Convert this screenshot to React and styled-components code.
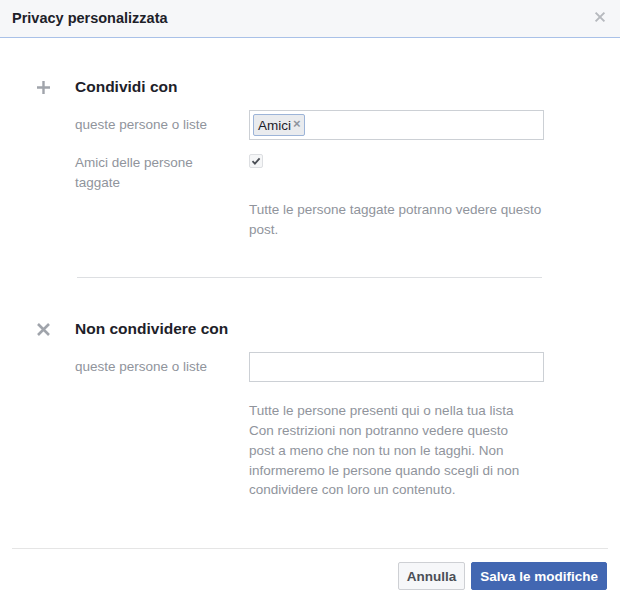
import React from 'react';
import styled, {createGlobalStyle} from 'styled-components';

const GlobalStyle = createGlobalStyle`
    html, body {
        margin: 0;
        padding: 0;
        background: #fff;
    }
    body {
        font-family: "Liberation Sans", Arial, Helvetica, sans-serif;
        color: #1d2129;
    }
`;

function PlusIcon () {
    return (
        <svg width="15" height="15" viewBox="0 0 15 15">
            <path d="M7.5 1v13M1 7.5h13" stroke="#a0a4ab" strokeWidth="2.4" fill="none"/>
        </svg>
    );
}

function CrossIcon ({size = 15, color = '#a0a4ab', stroke = 2.6}) {
    return (
        <svg width={size} height={size} viewBox="0 0 15 15">
            <path d="M2 2l11 11M13 2L2 13" stroke={color} strokeWidth={stroke} fill="none"/>
        </svg>
    );
}

function CheckIcon () {
    return (
        <svg width="10" height="10" viewBox="0 0 10 10">
            <path d="M1.5 5.2l2.4 2.4L8.6 2.4" stroke="#4b4f56" strokeWidth="1.8" fill="none"/>
        </svg>
    );
}

export default function App () {
    return (
        <>
            <GlobalStyle/>
            <Dialog>
                <Header>
                    <Title>Privacy personalizzata</Title>
                    <CloseButton><CrossIcon size={12} color="#b6b9be" stroke={2.4}/></CloseButton>
                </Header>

                <Body>
                    <Section>
                        <SectionHead>
                            <IconCell><PlusIcon/></IconCell>
                            <SectionTitle>Condividi con</SectionTitle>
                        </SectionHead>

                        <Row>
                            <Label>queste persone o liste</Label>
                            <TokenInput>
                                <Token>Amici<TokenRemove>×</TokenRemove></Token>
                            </TokenInput>
                        </Row>

                        <Row top>
                            <Label>Amici delle persone<br/>taggate</Label>
                            <Field>
                                <Checkbox><CheckIcon/></Checkbox>
                            </Field>
                        </Row>

                        <Help offset={-6} width={296}>
                            Tutte le persone taggate potranno vedere questo post.
                        </Help>
                    </Section>

                    <Divider/>

                    <Section>
                        <SectionHead>
                            <IconCell><CrossIcon/></IconCell>
                            <SectionTitle>Non condividere con</SectionTitle>
                        </SectionHead>

                        <Row>
                            <Label>queste persone o liste</Label>
                            <TokenInput/>
                        </Row>

                        <Help offset={6} width={288}>
                            Tutte le persone presenti qui o nella tua lista Con restrizioni non potranno vedere questo post a meno che non tu non le tagghi. Non informeremo le persone quando scegli di non condividere con loro un contenuto.
                        </Help>
                    </Section>
                </Body>

                <Footer>
                    <Button>Annulla</Button>
                    <Button primary>Salva le modifiche</Button>
                </Footer>
            </Dialog>
        </>
    );
}

const Dialog = styled.div`
    width: 620px;
    height: 600px;
    background: #fff;
    display: flex;
    flex-direction: column;
`;

const Header = styled.div`
    height: 38px;
    background: #f6f7f9;
    border-bottom: 1px solid #a9c1e8;
    display: flex;
    align-items: center;
    justify-content: space-between;
    padding: 0 14px 0 12px;
    box-sizing: border-box;
    flex-shrink: 0;
`;

const Title = styled.h1`
    margin: 0;
    font-size: 14.5px;
    font-weight: bold;
    color: #1d2129;
    margin-top: -2px;
`;

const CloseButton = styled.span`
    display: flex;
    align-items: center;
    margin-top: -4px;
`;

const Body = styled.div`
    padding: 39px 0 0 36px;
    flex: 1;
`;

const Section = styled.div`
    display: flex;
    flex-direction: column;
`;

const SectionHead = styled.div`
    display: flex;
    align-items: center;
    height: 20px;
    margin-bottom: 13px;
`;

const IconCell = styled.div`
    width: 39px;
    display: flex;
    align-items: center;
`;

const SectionTitle = styled.h2`
    margin: 0;
    font-size: 15.5px;
    font-weight: bold;
    color: #1d2129;
    line-height: 20px;
`;

const Row = styled.div`
    display: flex;
    align-items: ${props => props.top ? 'flex-start' : 'center'};
    margin-left: 39px;
    margin-bottom: 13px;
`;

const Label = styled.div`
    width: 174px;
    font-size: 13.5px;
    line-height: 20px;
    color: #90949c;
`;

const Field = styled.div`
    width: 295px;
    padding-top: 1px;
`;

const TokenInput = styled.div`
    width: 295px;
    height: 30px;
    box-sizing: border-box;
    border: 1px solid #ccd0d5;
    background: #fff;
    display: flex;
    align-items: center;
    padding: 0 3px;
`;

const Token = styled.span`
    display: inline-flex;
    align-items: center;
    height: 22px;
    box-sizing: border-box;
    padding: 0 3px 0 4px;
    background: #e9ebee;
    border: 1px solid #9cb4d8;
    border-radius: 2px;
    font-size: 13.5px;
    color: #1d2129;
`;

const TokenRemove = styled.span`
    color: #8d949e;
    font-weight: bold;
    font-size: 13px;
    margin-left: 2px;
    margin-top: -3px;
`;

const Checkbox = styled.span`
    width: 14px;
    height: 14px;
    box-sizing: border-box;
    border: 1px solid #dddfe2;
    border-radius: 2px;
    background: #f5f6f7;
    display: flex;
    align-items: center;
    justify-content: center;
`;

const Help = styled.p`
    margin: ${props => props.offset}px 0 0 213px;
    width: ${props => props.width}px;
    font-size: 13.5px;
    line-height: 19.7px;
    color: #90949c;
`;

const Divider = styled.div`
    width: 465px;
    height: 1px;
    background: #dddfe2;
    margin: 38px 0 41px 41px;
`;

const Footer = styled.div`
    margin: 0 12px 0 12px;
    border-top: 1px solid #e5e5e5;
    display: flex;
    justify-content: flex-end;
    gap: 6px;
    padding: 13px 1px 10px 0;
    flex-shrink: 0;
`;

const Button = styled.button`
    height: 28px;
    box-sizing: border-box;
    padding: 0 8px;
    font-family: "Liberation Sans", Arial, sans-serif;
    font-size: 13.5px;
    font-weight: bold;
    border-radius: 2px;
    cursor: pointer;
    border: 1px solid ${props => props.primary ? '#4267b2' : '#ced0d4'};
    background: ${props => props.primary ? '#4267b2' : '#f6f7f9'};
    color: ${props => props.primary ? '#fff' : '#4b4f56'};
`;
